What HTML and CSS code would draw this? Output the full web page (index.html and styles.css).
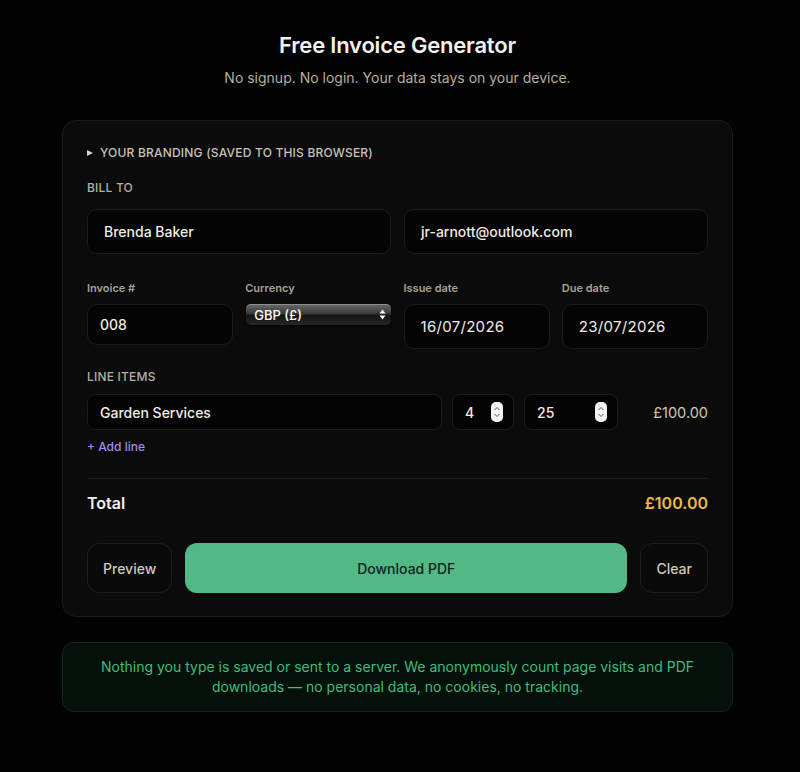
FILE: index.html
```html
<!DOCTYPE html>
<html lang="en">
  <head>
    <meta charset="UTF-8" />
    <meta name="viewport" content="width=device-width, initial-scale=1.0" />
    <title>Free Invoice Generator</title>
    <link rel="stylesheet" href="styles.css">
  </head>
  <body>
    <div class="page">
      <h1>Free Invoice Generator</h1>
      <p class="tagline">No signup. No login. Your data stays on your device.</p>

      <div class="card">
        <div class="branding"><span class="caret"></span>Your branding (saved to this browser)</div>

        <div class="section-title">Bill to</div>
        <div class="bill-row">
          <div class="field big">Brenda Baker</div>
          <div class="field big">jr-arnott@outlook.com</div>
        </div>

        <div class="meta-row">
          <div class="meta">
            <label>Invoice #</label>
            <div class="field">008</div>
          </div>
          <div class="meta">
            <label>Currency</label>
            <div class="select">GBP (£)
              <svg class="select-arrows" width="7" height="11" viewBox="0 0 7 11"><path d="M3.5 0.5L6.5 4.5H0.5Z M3.5 10.5L0.5 6.5H6.5Z" fill="#fff"/></svg>
            </div>
          </div>
          <div class="meta">
            <label>Issue date</label>
            <div class="field date">16/07/2026</div>
          </div>
          <div class="meta">
            <label>Due date</label>
            <div class="field date">23/07/2026</div>
          </div>
        </div>

        <div class="section-title tight">Line items</div>
        <div class="line-row">
          <div class="field line desc">Garden Services</div>
          <div class="field line qty">4<span class="spin"></span></div>
          <div class="field line price">25<span class="spin"></span></div>
          <div class="amount">£100.00</div>
        </div>
        <a href="#" class="add-line">+ Add line</a>

        <div class="total-row">
          <span>Total</span>
          <span class="total-value">£100.00</span>
        </div>

        <div class="actions">
          <button class="btn ghost preview">Preview</button>
          <button class="btn primary">Download PDF</button>
          <button class="btn ghost">Clear</button>
        </div>
      </div>

      <div class="notice">
        Nothing you type is saved or sent to a server. We anonymously count page visits and PDF
        downloads — no personal data, no cookies, no tracking.
      </div>
    </div>
  </body>
</html>
```
FILE: styles.css
```css
body {
  margin: 0;
  padding: 0 5px 0 0;
  background: #030303;
  color: #eeeae2;
  font-family: Inter, "Noto Sans", sans-serif;
}
.page {
  width: 671px;
  margin: 0 auto;
  padding-top: 31px;
}
h1 {
  margin: 0;
  font-size: 22px;
  line-height: 28px;
  font-weight: 600;
  text-align: center;
  color: #f4f1ea;
  letter-spacing: -0.2px;
}
.tagline {
  margin: 10px 0 0;
  font-size: 14px;
  line-height: 18px;
  text-align: center;
  color: #b3ada2;
}
.card {
  margin-top: 33px;
  padding: 24px 24px 23px;
  background: #0b0b0b;
  border: 1px solid #1c1c1c;
  border-radius: 14px;
}
.branding {
  display: flex;
  align-items: center;
  font-size: 12px;
  line-height: 16px;
  font-weight: 500;
  text-transform: uppercase;
  letter-spacing: 0.2px;
  color: #c8c2b6;
  margin-bottom: 19px;
}
.caret {
  width: 0;
  height: 0;
  border-left: 6px solid #d8d2c6;
  border-top: 3.5px solid transparent;
  border-bottom: 3.5px solid transparent;
  margin-right: 7px;
}
.section-title {
  font-size: 12px;
  line-height: 16px;
  font-weight: 500;
  text-transform: uppercase;
  letter-spacing: 0.2px;
  color: #b5afa4;
  margin-bottom: 13px;
}
.section-title.tight {
  margin-bottom: 9px;
}
.field {
  box-sizing: border-box;
  display: flex;
  align-items: center;
  background: #040404;
  border: 1px solid #1c1c1c;
  border-radius: 10px;
  padding: 0 12px;
  font-size: 14px;
  font-weight: 500;
  color: #f0ece4;
  height: 41px;
}
.bill-row {
  display: flex;
  gap: 13px;
}
.field.big {
  flex: 1;
  height: 45px;
  padding: 0 16px;
}
.meta-row {
  display: grid;
  grid-template-columns: repeat(4, 1fr);
  gap: 12px;
  margin-top: 27px;
  margin-bottom: 20px;
  align-items: start;
}
.meta label {
  display: block;
  font-size: 11px;
  line-height: 14px;
  font-weight: 600;
  color: #a7a195;
  margin-bottom: 9px;
}
.field.date {
  height: 45px;
  padding: 0 16px;
  font-size: 15px;
  font-weight: 400;
  letter-spacing: 0.3px;
}
.select {
  box-sizing: border-box;
  position: relative;
  height: 21px;
  margin: 0 1px;
  padding: 0 8px;
  display: flex;
  align-items: center;
  font-size: 13px;
  font-weight: 500;
  color: #fff;
  border-radius: 5px;
  background: linear-gradient(#6a6a6a 0%, #3a3a3a 45%, #151515 55%, #262626 100%);
  box-shadow: inset 0 1px 0 rgba(255, 255, 255, 0.25), 0 1px 2px rgba(0, 0, 0, 0.8);
}
.select-arrows {
  position: absolute;
  right: 5px;
  top: 5px;
}
.line-row {
  display: flex;
  gap: 10px;
  align-items: center;
}
.field.line {
  height: 36px;
  border-radius: 8px;
  justify-content: space-between;
  padding: 0 10px 0 12px;
}
.desc {
  flex: 1;
}
.qty {
  width: 62px;
}
.price {
  width: 94px;
}
.spin {
  width: 12px;
  height: 20px;
  border-radius: 5px;
  background: #f2f2f2 url("data:image/svg+xml,%3Csvg xmlns='http://www.w3.org/2000/svg' width='12' height='20'%3E%3Cpath d='M3.5 8l2.5-2.5L8.5 8M3.5 12l2.5 2.5L8.5 12' stroke='%23555' stroke-width='1' fill='none'/%3E%3C/svg%3E") no-repeat center;
}
.amount {
  width: 80px;
  text-align: right;
  font-size: 14.5px;
  color: #cfc9bd;
}
.add-line {
  display: inline-block;
  margin-top: 9px;
  font-size: 12px;
  line-height: 16px;
  font-weight: 500;
  color: #a48af5;
  text-decoration: none;
}
.total-row {
  display: flex;
  justify-content: space-between;
  align-items: center;
  margin-top: 23px;
  padding-top: 14px;
  border-top: 1px solid #1c1c1c;
  font-size: 16px;
  line-height: 20px;
  font-weight: 600;
  color: #f4f1ea;
}
.total-value {
  color: #f0b94a;
}
.actions {
  display: flex;
  gap: 13px;
  margin-top: 30px;
}
.btn {
  height: 50px;
  border-radius: 12px;
  font-family: inherit;
  font-size: 14px;
  font-weight: 500;
  cursor: pointer;
}
.ghost {
  background: #0a0a0a;
  border: 1px solid #1e1e1e;
  color: #cdc7ba;
  padding: 0 15px;
}
.preview {
  width: 85px;
}
.primary {
  flex: 1;
  background: #52b986;
  border: none;
  color: #0c2418;
}
.notice {
  margin-top: 25px;
  padding: 14px 30px;
  background: #06100b;
  border: 1px solid #10291d;
  border-radius: 12px;
  font-size: 14px;
  line-height: 20px;
  text-align: center;
  color: #3fbd7c;
}
```
